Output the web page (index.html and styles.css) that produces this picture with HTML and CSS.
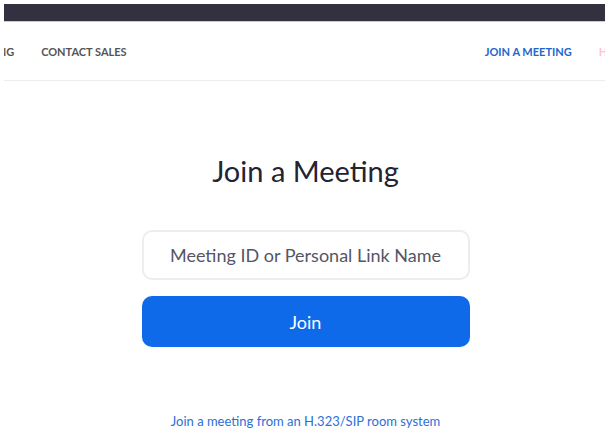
FILE: index.html
```html
<!DOCTYPE html>
<html lang="en">

<head>
    <meta charset="UTF-8">
    <meta name="viewport" content="width=device-width, initial-scale=1.0">
    <title>Join a Meeting</title>
    <link rel="stylesheet" href="styles.css">
</head>

<body>
    <div class="page">
        <div class="topbar"></div>

        <div class="nav">
            <div class="nav-left">
                <a href="#" class="nav-link cut">PLANS &amp; PRICING</a>
                <a href="#" class="nav-link">CONTACT SALES</a>
            </div>
            <div class="nav-right">
                <a href="#" class="nav-link active">JOIN A MEETING</a>
                <a href="#" class="nav-link host">HOST A MEETING</a>
            </div>
        </div>

        <div class="main">
            <h1>Join a Meeting</h1>
            <form class="join-form">
                <input type="text" placeholder="Meeting ID or Personal Link Name">
                <button type="button">Join</button>
            </form>
            <a href="#" class="room-link">Join a meeting from an H.323/SIP room system</a>
        </div>
    </div>
</body>

</html>
```

FILE: styles.css
```css
body {
    margin: 0;
    padding: 0;
    background-color: white;
    font-family: Lato, "Noto Sans", sans-serif;
}

.page {
    margin: 4px 0 0 4px;
    overflow: hidden;
}

.topbar {
    height: 17px;
    background-color: #33313f;
    border-bottom: 1px solid #c9c9d1;
}

.nav {
    display: flex;
    justify-content: space-between;
    align-items: center;
    height: 58px;
    border-bottom: 1px solid #ececec;
}

.nav-left,
.nav-right {
    display: flex;
    align-items: center;
    white-space: nowrap;
}

.nav-link {
    text-decoration: none;
    font-size: 11px;
    font-weight: bold;
    color: #555;
}

.nav-link.cut {
    margin-left: -82px;
    margin-right: 27px;
}

.nav-link.active {
    color: #2266cc;
}

.nav-link.host {
    margin-left: 27px;
    margin-right: -85px;
    color: #ffc2d6;
}

.main {
    display: flex;
    flex-direction: column;
    align-items: center;
    padding-left: 2px;
}

.main h1 {
    margin: 72px 0 0;
    font-size: 29px;
    font-weight: normal;
    color: #232333;
    line-height: 36px;
}

.join-form {
    display: flex;
    flex-direction: column;
    gap: 16px;
    margin-top: 41px;
    width: 328px;
}

.join-form input {
    box-sizing: border-box;
    height: 50px;
    border: 2px solid #ededed;
    border-radius: 10px;
    text-align: center;
    font-family: inherit;
    font-size: 18px;
    color: #232333;
}

.join-form input::placeholder {
    color: #555566;
}

.join-form button {
    height: 51px;
    border: none;
    border-radius: 10px;
    background-color: #0e6ae8;
    color: white;
    font-family: inherit;
    font-size: 18px;
    cursor: pointer;
}

.room-link {
    margin-top: 66px;
    text-decoration: none;
    font-size: 13px;
    color: #2c6fd6;
}
```
